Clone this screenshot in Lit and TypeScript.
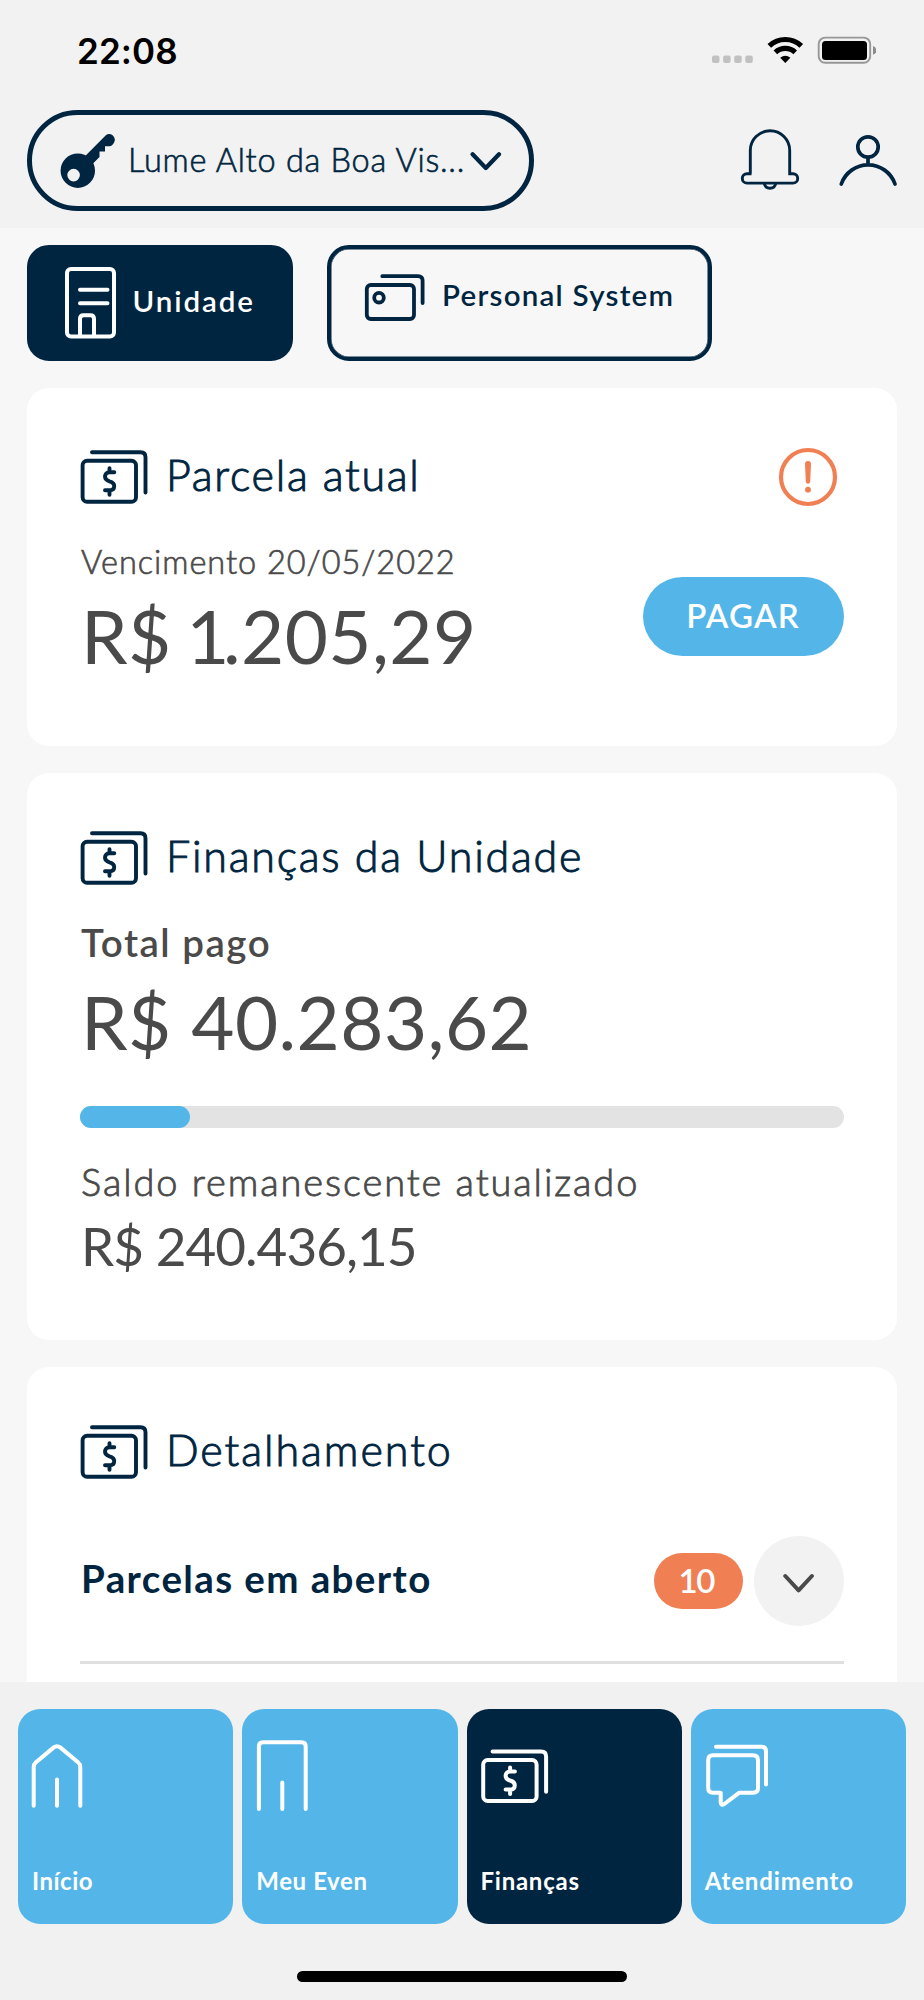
import { LitElement, html, svg, css } from "lit";
import { customElement, property } from "lit/decorators.js";
import { classMap } from "lit/directives/class-map.js";

const cashShapes = svg`<rect x="82.6" y="460.8" width="53.4" height="40.9" rx="4.5"/>
  <path d="M92 452.3H140.5Q145.5 452.3 145.5 457.3V492.5"/>
  <path d="M109.5 468.3V471.8M114.3 472.3H109.5C106.5 472.3 105 474.3 105 476.6C105 479.6 107.2 480.6 109.5 481.3C112 482 114.2 483.2 114.2 486C114.2 488.8 112.3 490.3 109.5 490.3H105M109.5 490.5V494.8"/>`;

const cashIcon = html`<svg width="68" height="54" viewBox="80 450 68 54" fill="none" stroke="currentColor" stroke-width="3.9" stroke-linecap="round" stroke-linejoin="round">${cashShapes}</svg>`;

@customElement("status-bar")
export class StatusBar extends LitElement {
  static styles = css`
    :host { display: flex; height: 110px; box-sizing: border-box; padding: 30px 48px 0 77px; align-items: flex-start; justify-content: space-between; }
    .clock { font: 600 35px/42px Inter, sans-serif; letter-spacing: 0.1px; color: #000; }
    svg { display: block; }
  `;
  render() {
    return html`<span class="clock">22:08</span>
      <svg width="166" height="40" viewBox="710 30 166 40">
        ${[712, 723.1, 734.2, 745.3].map((x) => svg`<rect x=${x} y="55.6" width="7.5" height="7.5" rx="2" fill="#c1c1c1"/>`)}
        <g fill="none" stroke="#000" stroke-width="5.2">
          <path d="M769.3 45.8A23.4 23.4 0 0 1 801.3 45.8"/>
          <path d="M775.4 52.4A14.4 14.4 0 0 1 795.2 52.4"/>
        </g>
        <path d="M785.3 63L780.2 57.8Q785.3 53.6 790.4 57.8Z"/>
        <rect x="818.7" y="37.6" width="51.5" height="25.2" rx="6.5" fill="none" stroke="#979797" stroke-width="1.9"/>
        <rect x="822" y="41" width="45" height="19" rx="3.5"/>
        <path d="M873 46Q876.4 47.4 876.4 50.3T873 54.8Z" fill="#8c8c8c"/>
      </svg>`;
  }
}

@customElement("unit-header")
export class UnitHeader extends LitElement {
  static styles = css`
    :host { display: flex; height: 118px; box-sizing: border-box; padding: 0 20px 17px 27px; color: #002540; align-items: flex-start; }
    .picker { flex: none; box-sizing: border-box; width: 507px; height: 101px; border: 5px solid #002540; border-radius: 51px; display: flex; align-items: center; padding: 0 27px 0 28px; }
    .name { flex: 1; padding: 0 0 1px 12px; font-size: 32.5px; line-height: 40px; font-weight: 300; -webkit-text-stroke: 0.6px currentColor; letter-spacing: 0.75px; white-space: nowrap; }
    .bell { margin: 17px 0 0 206px; }
    .person { margin: 17px 0 0 38px; }
    svg { display: block; flex: none; }
  `;
  render() {
    return html`<div class="picker">
        <svg width="56" height="56" viewBox="60 133 56 56" fill="currentColor">
          <path d="M84 157.2L105.6 135.4Q109 132.8 112.6 135.2Q116 138.2 114.3 142Q113 145.6 109.8 146.3H105V151.5H99.5V157L92 164.5Z"/>
          <path fill-rule="evenodd" d="M77.8 153.5A17.2 17.2 0 1 1 77.8 187.9A17.2 17.2 0 1 1 77.8 153.5ZM73.6 168.8A6.3 6.3 0 1 0 73.6 181.4A6.3 6.3 0 1 0 73.6 168.8Z"/>
        </svg>
        <span class="name">Lume Alto da Boa Vis...</span>
        <svg width="32" height="20" viewBox="470 151 32 20" fill="none" stroke="currentColor" stroke-width="4.2" stroke-linecap="round" stroke-linejoin="round"><path d="M472.6 154.2L485.8 168L499 154.2"/></svg>
      </div>
      <svg class="bell" width="60" height="64" viewBox="740 127 60 64" fill="none" stroke="currentColor" stroke-width="2.9">
        <path d="M750.3 173.7V150.5A19.7 19.7 0 0 1 789.7 150.5V173.7H793A4.7 4.7 0 0 1 793 183.1H747A4.7 4.7 0 0 1 747 173.7H751.5"/>
        <path d="M764.3 183.5A5.8 5.8 0 0 0 775.7 183.5"/>
      </svg>
      <svg class="person" width="60" height="64" viewBox="838 127 60 64" fill="none" stroke="currentColor" stroke-width="3.7" stroke-linecap="round">
        <circle cx="868" cy="147" r="10.2"/><path d="M868 158V163M841.3 184A28.4 28.4 0 0 1 895 184"/>
      </svg>`;
  }
}

@customElement("view-tabs")
export class ViewTabs extends LitElement {
  static styles = css`
    :host { display: flex; gap: 34px; padding: 17px 27px 0; }
    .tab { box-sizing: border-box; height: 116px; border: 4px solid #002540; box-shadow: inset 0 0 0 0.5px #002540; border-radius: 22px; display: flex; color: #002540; font-size: 29.5px; line-height: 36px; font-weight: 600; white-space: nowrap; }
    .on { width: 266px; background: #002540; color: #fff; padding: 17px 0 0 33px; gap: 16.5px; letter-spacing: 1.9px; }
    .off { width: 385px; padding: 24px 0 0 33px; gap: 17px; letter-spacing: 1.25px; }
    .on span { margin-top: 17px; }
    .off span { margin-top: 4px; }
    svg { display: block; flex: none; }
  `;
  render() {
    return html`<div class="tab on">
        <svg width="52" height="74" viewBox="64 266 52 74" fill="none" stroke="currentColor" stroke-width="4" stroke-linecap="round">
          <rect x="67" y="269" width="47" height="67.5" rx="4"/>
          <path d="M80 289.7H107.5M80 303.2H107.5M80 336V319Q80 315.3 83.5 315.3H90.5Q94 315.3 94 319V336"/>
        </svg><span>Unidade</span>
      </div>
      <div class="tab off">
        <svg width="61" height="50" viewBox="364 273 61 50" fill="none" stroke="currentColor" stroke-width="3.8" stroke-linecap="round">
          <rect x="366.8" y="285" width="47.2" height="34" rx="4"/>
          <path d="M382.3 276.2H418Q422.6 276.2 422.6 280.8V303"/>
          <circle cx="379" cy="297.7" r="4.8"/>
        </svg><span>Personal System</span>
      </div>`;
  }
}

@customElement("info-card")
export class InfoCard extends LitElement {
  static styles = css`
    :host { display: block; box-sizing: border-box; background: #fff; border-radius: 22px; padding: 58px 53px 0; color: #4a4a4a; }
    .head { display: flex; height: 54px; gap: 18px; align-items: center; color: #002540; }
    .title { flex: 1; font-size: 43px; line-height: 50px; font-weight: 300; -webkit-text-stroke: 0.95px currentColor; letter-spacing: var(--title-spacing, 1.8px); padding-bottom: 4px; }
    svg { display: block; }
  `;
  @property() heading = "";
  render() {
    return html`<div class="head">${cashIcon}<span class="title">${this.heading}</span><slot name="badge"></slot></div><slot></slot>`;
  }
}

@customElement("bottom-nav")
export class BottomNav extends LitElement {
  static styles = css`
    :host { display: flex; flex-direction: column; align-items: center; height: 318px; box-sizing: border-box; background: #f1f1f1; padding: 27px 18px 0; }
    .tiles { align-self: stretch; display: grid; grid-template-columns: repeat(4, 1fr); gap: 9px; }
    .tile { height: 215px; box-sizing: border-box; border-radius: 22px; background: #54b6e8; color: #fff; padding: 30px 0 0 13px; }
    .active { background: #002540; }
    .icon { display: block; }
    .icon svg { display: block; height: 74px; }
    .label { display: block; margin-top: 53px; padding-left: 1px; font-size: 24px; line-height: 30px; font-weight: 700; white-space: nowrap; }
    .l0 { letter-spacing: 0.5px; } .l1 { letter-spacing: 0.6px; } .l2 { letter-spacing: 0.75px; } .l3 { letter-spacing: 0.85px; }
    .handle { width: 330px; height: 11px; border-radius: 6px; background: #000; margin-top: 47px; }
  `;
  private line(x: number, body: unknown) {
    return html`<svg width="74" height="74" viewBox="${x} 1739 74 74" fill="none" stroke="currentColor" stroke-width="4" stroke-linecap="round" stroke-linejoin="round">${body}</svg>`;
  }
  render() {
    const items = [
      { label: "Início", icon: this.line(31, svg`<path d="M33.7 1805.8V1767Q33.7 1764.3 36 1762.3L53.5 1747.6Q57 1744.8 60.5 1747.6L78 1762.3Q80.3 1764.3 80.3 1767V1805.8M57 1779.5V1805.8"/>`) },
      { label: "Meu Even", icon: this.line(255.4, svg`<path d="M259.3 1809V1746.6Q259.3 1742.3 263.6 1742.3H301.8Q306.1 1742.3 306.1 1746.6V1809M282.7 1782.5V1809"/>`) },
      { label: "Finanças", icon: this.line(479.6, svg`<g transform="translate(400.2 1299.2)">${cashShapes}</g>`) },
      { label: "Atendimento", icon: this.line(704, svg`<path d="M716 1746.8H761.5Q766 1746.8 766 1751.3V1784.5"/>
          <path d="M713 1755.3H753Q758 1755.3 758 1760.3V1788Q758 1792.8 753 1792.8H739L724.3 1804Q720.9 1806 720.7 1802.6V1792.8H713Q708.2 1792.8 708.2 1788V1760.3Q708.2 1755.3 713 1755.3Z"/>`) },
    ];
    return html`<div class="tiles">${items.map((it, i) => html`<div class=${classMap({ tile: true, active: i === 2 })}>
        <span class="icon">${it.icon}</span><span class="label l${i}">${it.label}</span></div>`)}</div>
      <div class="handle"></div>`;
  }
}

@customElement("app-root")
export class AppRoot extends LitElement {
  static styles = css`
    :host { display: flex; flex-direction: column; width: 924px; height: 2000px; overflow: hidden; background: #f7f7f7; font-family: Lato, sans-serif; }
    .top { flex: none; background: #f2f2f2; }
    .scroll { flex: 1; min-height: 0; overflow: hidden; }
    .cards { display: flex; flex-direction: column; gap: 27px; padding: 27px 27px 0; }
    .current { height: 358px; padding-top: 62px; --title-spacing: 1.7px; }
    .unit { height: 567px; --title-spacing: 1.77px; }
    .detail { height: 400px; --title-spacing: 1.95px; }
    .warn { display: block; margin-right: 6px; }
    .pay-row { display: flex; justify-content: space-between; margin-top: 38px; }
    .due { font-size: 32.5px; line-height: 40px; font-weight: 300; -webkit-text-stroke: 0.65px currentColor; letter-spacing: 0.97px; padding-left: 1px; }
    .amount { font-size: 74.5px; line-height: 90px; letter-spacing: 0.44px; white-space: nowrap; padding-left: 1px; }
    .pay-row .amount { margin-top: 8px; word-spacing: -5px; }
    .one { letter-spacing: -6.5px; }
    .pay { box-sizing: border-box; width: 201px; height: 79px; border-radius: 40px; background: #54b6e8; color: #fff; margin-top: 35px; font-size: 33px; line-height: 77px; font-weight: 600; letter-spacing: 1.15px; text-indent: -1px; text-align: center; }
    .paid { margin-top: 34px; font-size: 38.5px; line-height: 46px; font-weight: 600; letter-spacing: 1.5px; padding-left: 1px; }
    .unit .amount { margin-top: 11px; }
    .track { margin-top: 40px; height: 22px; border-radius: 11px; background: #e3e3e3; }
    .fill { height: 22px; border-radius: 11px; background: #54b6e8; }
    .rest { margin-top: 30px; font-size: 38px; line-height: 46px; font-weight: 300; -webkit-text-stroke: 0.8px currentColor; letter-spacing: 1.9px; padding-left: 1px; }
    .unit .balance { margin-top: 12px; font-size: 53px; line-height: 60px; letter-spacing: -0.95px; }
    .open { display: flex; align-items: center; height: 90px; margin-top: 57px; }
    .open b { flex: 1; color: #002540; font-size: 38.5px; font-weight: 700; line-height: 46px; letter-spacing: 1.4px; padding: 0 0 6px 1px; }
    .count { width: 89.5px; height: 56px; border-radius: 28px; background: #f08054; color: #fff; font-size: 33px; line-height: 54px; font-weight: 600; letter-spacing: -1.5px; text-indent: -4px; text-align: center; }
    .toggle { width: 90px; height: 90px; border-radius: 50%; background: #f2f2f2; display: grid; place-items: center; margin-left: 11px; padding-top: 4px; box-sizing: border-box; }
    .toggle svg { display: block; }
    .rule { height: 2.5px; margin-top: 35px; background: #e0e0e0; }
  `;
  render() {
    const paid = 14.4;
    return html`<div class="top"><status-bar></status-bar><unit-header></unit-header></div>
      <div class="scroll">
        <view-tabs></view-tabs>
        <div class="cards">
          <info-card class="current" heading="Parcela atual">
            <svg class="warn" slot="badge" width="60" height="60" viewBox="778 447 60 60" fill="#f08054">
              <circle cx="808" cy="477" r="27" fill="none" stroke="#f08054" stroke-width="4.2"/>
              <path d="M805 464Q805 461 808 461T811 464L810.2 481.5Q810 483.8 808 483.8T805.8 481.5Z"/>
              <circle cx="808" cy="489.7" r="2.9"/>
            </svg>
            <div class="pay-row">
              <div><div class="due">Vencimento 20/05/2022</div>
                <div class="amount">R$ <span class="one">1</span>.205,29</div></div>
              <div class="pay">PAGAR</div>
            </div>
          </info-card>
          <info-card class="unit" heading="Finanças da Unidade">
            <div class="paid">Total pago</div>
            <div class="amount">R$ 40.283,62</div>
            <div class="track"><div class="fill" style="width:${paid}%"></div></div>
            <div class="rest">Saldo remanescente atualizado</div>
            <div class="amount balance">R$ 240.436,15</div>
          </info-card>
          <info-card class="detail" heading="Detalhamento">
            <div class="open"><b>Parcelas em aberto</b><span class="count">10</span>
              <span class="toggle"><svg width="32" height="20" viewBox="783 1573 32 20" fill="none" stroke="#4a4a4a" stroke-width="4" stroke-linecap="round" stroke-linejoin="round"><path d="M785.3 1576L798.6 1590.3L811.9 1576"/></svg></span></div>
            <div class="rule"></div>
          </info-card>
        </div>
      </div>
      <bottom-nav></bottom-nav>`;
  }
}
